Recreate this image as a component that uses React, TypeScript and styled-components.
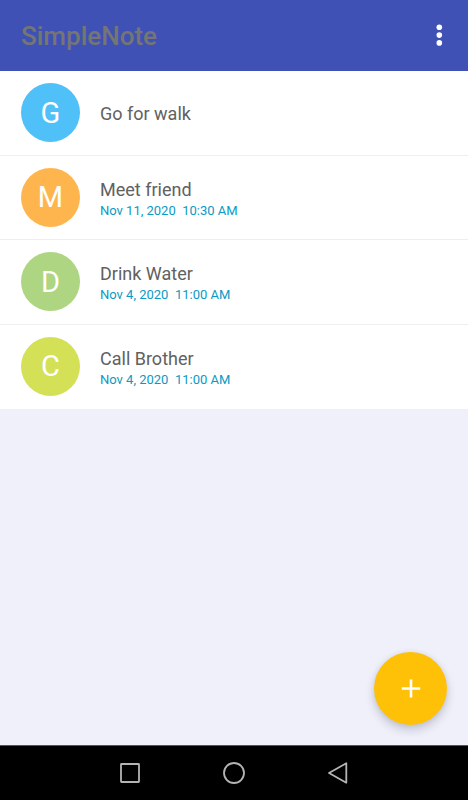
import React from "react";
import styled, { createGlobalStyle } from "styled-components";

const GlobalStyle = createGlobalStyle`
  *, *::before, *::after { box-sizing: border-box; }
  body { margin: 0; background: #eff0f9; font-family: Roboto, "Liberation Sans", sans-serif; }
  button { margin: 0; padding: 0; border: 0; background: none; font: inherit; cursor: pointer; }
`;

const Screen = styled.div`
  display: flex;
  flex-direction: column;
  min-height: 100vh;
`;

const AppBar = styled.header`
  display: flex;
  align-items: center;
  justify-content: space-between;
  height: 71px;
  padding: 0 16px 0 21px;
  background: #3f51b5;
`;

const Title = styled.h1`
  margin: 0;
  font-size: 26px;
  line-height: 32px;
  font-weight: 500;
  color: #757575;
`;

const IconButton = styled.button`
  display: grid;
  place-items: center;
  width: 26px;
  height: 32px;
`;

const Main = styled.main`
  display: flex;
  flex-direction: column;
  flex: 1;
`;

const NoteList = styled.ul`
  display: grid;
  grid-auto-rows: 1fr;
  min-height: 338px;
  margin: 0;
  padding: 0;
  list-style: none;
  background: #fff;
`;

const NoteRow = styled.li`
  display: flex;
  align-items: center;
  gap: 21px;
  padding: 0 21px;
  border-bottom: 1px solid #eeeeee;
  &:last-child {
    border-bottom-color: transparent;
  }
`;

const Avatar = styled.span<{ $color: string }>`
  display: grid;
  place-items: center;
  flex: none;
  width: 59px;
  height: 59px;
  margin-right: -1px;
  border-radius: 50%;
  background: ${(p) => p.$color};
  color: #fff;
  font-size: 29px;
  line-height: 32px;
`;

const NoteText = styled.div`
  display: flex;
  flex-direction: column;
  padding-top: 3px;
`;

const NoteName = styled.span`
  font-size: 18px;
  line-height: 24px;
  color: #616161;
`;

const NoteDate = styled.time`
  font-size: 13px;
  line-height: 18px;
  color: #0a9ac4;
  white-space: pre;
`;

const Actions = styled.div`
  display: flex;
  justify-content: flex-end;
  margin-top: auto;
  padding: 20px 21px;
`;

const AddButton = styled.button`
  && {
    display: grid;
    place-items: center;
    width: 73px;
    height: 73px;
    border-radius: 50%;
    background: #fec107;
    box-shadow: 0 5px 10px rgba(40, 45, 80, 0.22), 0 0 5px rgba(40, 45, 80, 0.08);
  }
`;

const NavBar = styled.nav`
  display: flex;
  justify-content: center;
  height: 55px;
  border-top: 1px solid #55555a;
  background: #000;
`;

const NavButton = styled.button`
  display: grid;
  place-items: center;
  width: 104px;
`;

const notes = [
  { name: "Go for walk", date: "", color: "#4fc1f8" },
  { name: "Meet friend", date: "Nov 11, 2020  10:30 AM", color: "#ffb54e" },
  { name: "Drink Water", date: "Nov 4, 2020  11:00 AM", color: "#aed581" },
  { name: "Call Brother", date: "Nov 4, 2020  11:00 AM", color: "#d4e157" },
];

const navItems = [
  { label: "Recent apps", shape: <rect x="3" y="3" width="18" height="18" rx="0.5" /> },
  { label: "Home", shape: <circle cx="12" cy="12" r="10" /> },
  { label: "Back", shape: <path d="M20.3 2.3v19.4L3 12z" /> },
];

export default function App() {
  return (
    <>
      <GlobalStyle />
      <Screen>
        <AppBar>
          <Title>SimpleNote</Title>
          <IconButton type="button" aria-label="More options">
            <svg width="8" height="24" viewBox="0 0 8 24" fill="#fff">
              <circle cx="4.3" cy="3.3" r="2.8" />
              <circle cx="4.3" cy="11.1" r="2.8" />
              <circle cx="4.3" cy="18.9" r="2.8" />
            </svg>
          </IconButton>
        </AppBar>
        <Main>
          <NoteList>
            {notes.map((note) => (
              <NoteRow key={note.name}>
                <Avatar $color={note.color} aria-hidden="true">
                  {note.name[0]}
                </Avatar>
                <NoteText>
                  <NoteName>{note.name}</NoteName>
                  {note.date && <NoteDate>{note.date}</NoteDate>}
                </NoteText>
              </NoteRow>
            ))}
          </NoteList>
          <Actions>
            <AddButton type="button" aria-label="Add note">
              <svg width="20" height="20" viewBox="0 0 20 20" fill="none" stroke="#fff" strokeWidth="2.6">
                <path d="M10 .5v18M.8 9.5h18.4" />
              </svg>
            </AddButton>
          </Actions>
        </Main>
        <NavBar>
          {navItems.map((item) => (
            <NavButton key={item.label} type="button" aria-label={item.label}>
              <svg
                width="24"
                height="24"
                viewBox="0 0 24 24"
                fill="none"
                stroke="#b4b4b4"
                strokeWidth="1.8"
                strokeLinejoin="round"
              >
                {item.shape}
              </svg>
            </NavButton>
          ))}
        </NavBar>
      </Screen>
    </>
  );
}
